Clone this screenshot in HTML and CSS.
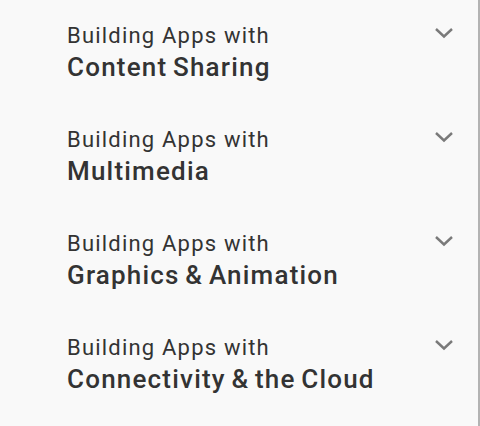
FILE: index.html
```html
<!DOCTYPE html>
<html>
<head>
<meta charset="utf-8">
<link rel="stylesheet" href="styles.css">
</head>
<body>
<div class="panel">
  <div class="item">
    <div class="titles">
      <div class="pre">Building Apps with</div>
      <div class="main">Content Sharing</div>
    </div>
    <svg class="chev" width="20" height="12" viewBox="0 0 20 12"><path d="M2 2 L10 9.5 L18 2" fill="none" stroke="#7a7a7a" stroke-width="2.4"/></svg>
  </div>
  <div class="item">
    <div class="titles">
      <div class="pre">Building Apps with</div>
      <div class="main">Multimedia</div>
    </div>
    <svg class="chev" width="20" height="12" viewBox="0 0 20 12"><path d="M2 2 L10 9.5 L18 2" fill="none" stroke="#7a7a7a" stroke-width="2.4"/></svg>
  </div>
  <div class="item">
    <div class="titles">
      <div class="pre">Building Apps with</div>
      <div class="main">Graphics &amp; Animation</div>
    </div>
    <svg class="chev" width="20" height="12" viewBox="0 0 20 12"><path d="M2 2 L10 9.5 L18 2" fill="none" stroke="#7a7a7a" stroke-width="2.4"/></svg>
  </div>
  <div class="item">
    <div class="titles">
      <div class="pre">Building Apps with</div>
      <div class="main">Connectivity &amp; the Cloud</div>
    </div>
    <svg class="chev" width="20" height="12" viewBox="0 0 20 12"><path d="M2 2 L10 9.5 L18 2" fill="none" stroke="#7a7a7a" stroke-width="2.4"/></svg>
  </div>
</div>
</body>
</html>
```
FILE: styles.css
```css
html, body {
  margin: 0;
  padding: 0;
  background: #f9f9f9;
}
body {
  width: 480px;
  height: 426px;
  overflow: hidden;
  font-family: Roboto, "Liberation Sans", sans-serif;
  color: #333333;
}
.panel {
  width: 480px;
  height: 426px;
  box-sizing: border-box;
  border-right: 2px solid #b3b3b3;
  padding-top: 22px;
  display: flex;
  flex-direction: column;
  gap: 42px;
}
.item {
  display: flex;
  justify-content: space-between;
  align-items: flex-start;
  padding-left: 67px;
  padding-right: 24px;
}
.pre {
  font-size: 22px;
  line-height: 28px;
  font-weight: 400;
  letter-spacing: 1.2px;
}
.main {
  font-size: 26px;
  line-height: 34px;
  font-weight: 500;
  letter-spacing: 1.2px;
  word-spacing: -2px;
}
.chev {
  margin-top: 5px;
}
```
